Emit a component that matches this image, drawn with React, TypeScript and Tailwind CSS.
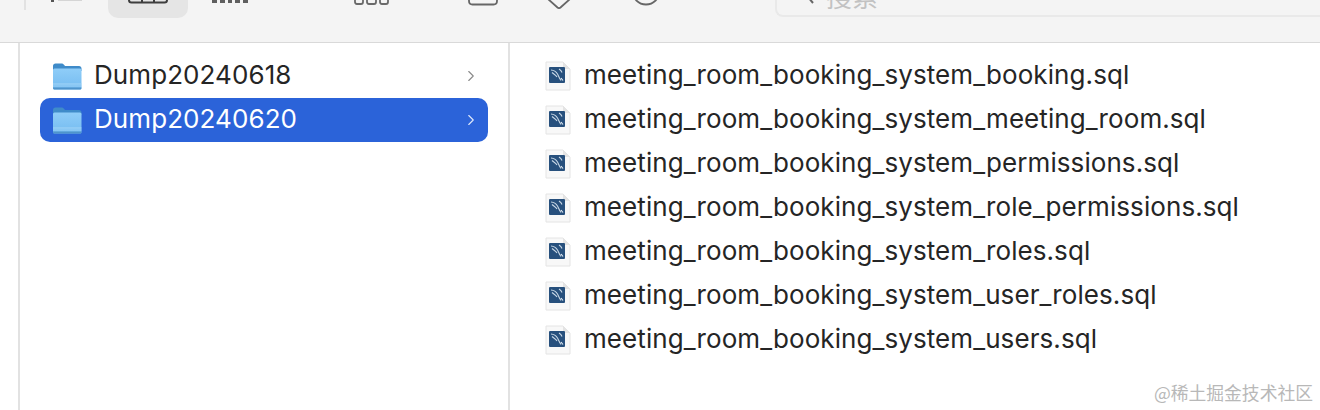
import React from 'react';
import { ChevronRight } from 'lucide-react';

const files = [
  'meeting_room_booking_system_booking.sql',
  'meeting_room_booking_system_meeting_room.sql',
  'meeting_room_booking_system_permissions.sql',
  'meeting_room_booking_system_role_permissions.sql',
  'meeting_room_booking_system_roles.sql',
  'meeting_room_booking_system_user_roles.sql',
  'meeting_room_booking_system_users.sql',
];

const FolderIcon = () => (
  <svg width="32" height="30" viewBox="0 0 32 30" className="shrink-0">
    <defs>
      <linearGradient id="folderBody" x1="0" y1="0" x2="0" y2="1">
        <stop offset="0" stopColor="#8fcdf8" />
        <stop offset="1" stopColor="#74bbf0" />
      </linearGradient>
    </defs>
    <path d="M2 5C2 3.500 3 2.500 4.500 2.500h6c1 0 1.600.4 2.300 1.100L14 5h14c1.500 0 2.500 1 2.500 2.500V10H2z" fill="#3f8bc9" />
    <rect x="2" y="7.500" width="28.500" height="21" rx="1.500" fill="url(#folderBody)" />
    <rect x="2" y="22.500" width="28.500" height="1" fill="#a3d5f8" />
    <rect x="2" y="24.500" width="28.500" height="1" fill="#9ad0f6" />
    <path d="M2 26.500h28.500v.5c0 .9-.7 1.500-1.500 1.500H3.500C2.700 28.500 2 27.900 2 27z" fill="#4f94cb" />
  </svg>
);

const SqlIcon = () => (
  <svg width="26" height="30" viewBox="0 0 26 30" className="shrink-0">
    <path d="M1 1h17l7 7v21H1z" fill="#f8f8f8" stroke="#e4e4e4" strokeWidth="1" />
    <path d="M18 1v7h7z" fill="#e4e4e4" />
    <rect x="4" y="6" width="16" height="16" rx="1" fill="#27507d" />
    <path d="M6 9c3 .2 5 1.500 6.500 4 1.200 2 1.500 4 3.500 6.500M7 11.500c2 2 3.500 2 5 4.500M14 8c1.500 1 2.500 2 3 3.500" fill="none" stroke="#c9d8e6" strokeWidth="1.100" />
    <path d="M16 17l2 2.500" stroke="#e6eef5" strokeWidth="1.200" />
  </svg>
);

// Toolbar icons are cropped by the top edge of the shot, only their lower part shows
const GalleryIcon = () => (
  <svg width="40" height="5" viewBox="0 0 40 5" className="shrink-0">
    <path d="M1 -4v4c0 1.500 1 2.500 2.500 2.500h33c1.500 0 2.500-1 2.500-2.500v-4M14 0v2M26 0v2" fill="none" stroke="#3d3d3d" strokeWidth="2" />
  </svg>
);

const ListIcon = () => (
  <svg width="38" height="4" viewBox="0 0 38 4" className="shrink-0">
    <path d="M1 0h5v3H1zM9 0h5v3H9zM17 0h4v3h-4zM24 0h5v3h-5zM32 0h5v3h-5z" fill="#5f5f5f" />
  </svg>
);

const GridIcon = () => (
  <svg width="38" height="6" viewBox="0 0 38 6" className="shrink-0">
    <path d="M2 -3v5c0 1 .5 2 2 2h4c1.500 0 2-1 2-2v-5M14 -3v5c0 1 .5 2 2 2h5c1.500 0 2-1 2-2v-5M27 -3v5c0 1 .5 2 2 2h4c1.500 0 2-1 2-2v-5" fill="none" stroke="#6a6a6a" strokeWidth="1.800" />
  </svg>
);

const ShareIcon = () => (
  <svg width="30" height="6" viewBox="0 0 30 6" className="shrink-0">
    <path d="M1 -6v7c0 2 1 3.500 3.500 3.500h21c2.500 0 3.500-1.500 3.500-3.500v-7" fill="none" stroke="#666" strokeWidth="1.800" />
  </svg>
);

const TagIcon = () => (
  <svg width="24" height="9" viewBox="0 0 24 9" className="shrink-0">
    <path d="M1 -1l9.500 8.500c1 .8 2 .8 3 0L23 -1" fill="none" stroke="#666" strokeWidth="1.800" />
  </svg>
);

const MoreIcon = () => (
  <svg width="30" height="6" viewBox="0 0 30 6" className="shrink-0">
    <circle cx="15" cy="-9" r="13.500" fill="none" stroke="#666" strokeWidth="1.800" />
  </svg>
);

const SearchTail = () => (
  <svg width="10" height="5" viewBox="0 0 10 5" className="shrink-0">
    <path d="M1 -3l5 6" fill="none" stroke="#666" strokeWidth="2" />
  </svg>
);

export default function App() {
  return (
    <div className="relative w-[1320px] h-[410px] overflow-hidden bg-white flex flex-col font-['Inter','Noto_Sans',sans-serif] text-[#252525]">
      {/* Toolbar */}
      <div className="h-[43px] shrink-0 bg-[#f4f4f4] border-b border-[#d9d9d9] flex items-start">
        <div className="ml-[24px] w-[2px] h-[10px] bg-[#e2e2e2]" />
        <div className="ml-[25px] w-[3px] h-[2px] bg-[#555]" />
        <div className="ml-[4px] w-[24px] h-px bg-[#d5d5d5]" />
        <div className="ml-[26px] w-[80px] h-[18px] bg-[#e5e5e5] rounded-b-[10px] pl-[20px]">
          <GalleryIcon />
        </div>
        <div className="ml-[23px]"><ListIcon /></div>
        <div className="ml-[104px]"><GridIcon /></div>
        <div className="ml-[77px]"><ShareIcon /></div>
        <div className="ml-[49px]"><TagIcon /></div>
        <div className="ml-[60px]"><MoreIcon /></div>
        <div className="ml-[114px] w-[545px] h-[17px] border-l-2 border-b-2 border-[#e9e9e9] rounded-bl-lg pl-[30px] flex items-start overflow-hidden">
          <SearchTail />
          <span className="ml-[9px] -mt-[17px] text-[26px] leading-[26px] text-[#c2c2c2] font-['Noto_Sans_CJK_SC',sans-serif]">搜索</span>
        </div>
      </div>

      <div className="flex-1 flex min-h-0">
        <div className="w-[20px] shrink-0 border-r-2 border-[#e2e2e2]" />

        {/* Folder column */}
        <div className="w-[490px] shrink-0 border-r-2 border-[#e2e2e2] pt-[11px] px-[20px] flex flex-col">
          <div className="h-[44px] flex items-center pl-[11px] pr-[8px] rounded-lg">
            <FolderIcon />
            <span className="ml-[11px] -mt-[4px] text-[26px] tracking-[0.08px] flex-1">Dump20240618</span>
            <ChevronRight size={18} strokeWidth={1.500} className="text-[#8a8a8a]" />
          </div>
          <div className="h-[44px] flex items-center pl-[11px] pr-[8px] rounded-[10px] bg-[#2b63d9] text-white">
            <FolderIcon />
            <span className="ml-[11px] -mt-[4px] text-[26px] tracking-[0.08px] flex-1">Dump20240620</span>
            <ChevronRight size={18} strokeWidth={1.500} className="text-[#dfe8fa]" />
          </div>
        </div>

        {/* File column */}
        <div className="flex-1 pt-[11px] pl-[35px] flex flex-col">
          {files.map((name) => (
            <div key={name} className="h-[44px] flex items-center">
              <SqlIcon />
              <span className="ml-[13px] -mt-[4px] text-[26px] tracking-[0.08px] whitespace-nowrap">{name}</span>
            </div>
          ))}
        </div>
      </div>

      <div className="absolute right-[7px] top-[380px] text-[17.800px] leading-[24px] text-[#b8b8b8] font-['Noto_Sans_CJK_SC',sans-serif]">
        @稀土掘金技术社区
      </div>
    </div>
  );
}
